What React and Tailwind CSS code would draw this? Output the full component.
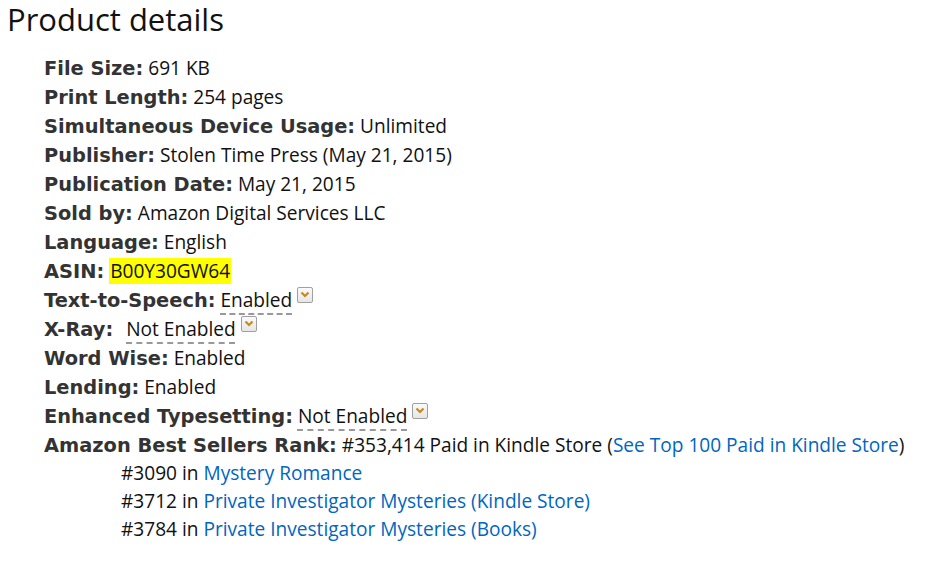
import React from 'react';

const rows = [
  { label: 'File Size:', value: '691 KB' },
  { label: 'Print Length:', value: '254 pages' },
  { label: 'Simultaneous Device Usage:', value: 'Unlimited' },
  { label: 'Publisher:', value: 'Stolen Time Press (May 21, 2015)' },
  { label: 'Publication Date:', value: 'May 21, 2015' },
  { label: 'Sold by:', value: 'Amazon Digital Services LLC' },
  { label: 'Language:', value: 'English' },
];

const ranks = [
  { rank: '#3090', name: 'Mystery Romance' },
  { rank: '#3712', name: 'Private Investigator Mysteries (Kindle Store)' },
  { rank: '#3784', name: 'Private Investigator Mysteries (Books)' },
];

const Label = ({ children }) => (
  <b className="font-['DejaVu_Sans',sans-serif] font-bold text-[19.4px] leading-none text-[#333]">{children}</b>
);

const Popover = () => (
  <span className="relative -top-[7px] inline-flex items-center justify-center w-[16px] h-[16px] ml-[5px] align-middle rounded-[2px] border border-[#a0a0a0] bg-gradient-to-b from-[#fafafa] to-[#e6e6e6]">
    <svg width="10" height="7" viewBox="0 0 10 7">
      <path d="M1.5 1.5 L5 5 L8.5 1.5" fill="none" stroke="#c9891d" strokeWidth="2.2" />
    </svg>
  </span>
);

const Dashed = ({ children }) => (
  <span className="underline decoration-dashed decoration-[#999] decoration-2 underline-offset-[6px]">{children}</span>
);

export default function App() {
  return (
    <div className="w-[925px] h-[562px] bg-white font-['Open_Sans',sans-serif] text-[#111] overflow-hidden">
      <h2 className="pl-[7px] text-[31px] leading-[38px]">Product details</h2>
      <ul className="pl-[44px] pt-[16px] text-[19.1px] leading-[29px]">
        {rows.map((r) => (
          <li key={r.label}>
            <Label>{r.label}</Label> {r.value}
          </li>
        ))}
        <li>
          <Label>ASIN:</Label> <span className="bg-[#ffff00] px-[1px]">B00Y30GW64</span>
        </li>
        <li>
          <Label>Text-to-Speech:</Label> <Dashed>Enabled</Dashed>
          <Popover />
        </li>
        <li>
          <Label>X-Ray:</Label>&nbsp;<span className="ml-[8px]"><Dashed>Not Enabled</Dashed></span>
          <Popover />
        </li>
        <li>
          <Label>Word Wise:</Label> Enabled
        </li>
        <li>
          <Label>Lending:</Label> Enabled
        </li>
        <li>
          <Label>Enhanced Typesetting:</Label> <Dashed>Not Enabled</Dashed>
          <Popover />
        </li>
        <li>
          <Label>Amazon Best Sellers Rank:</Label> #353,414 Paid in Kindle Store (
          <a className="text-[#0066c0]">See Top 100 Paid in Kindle Store</a>)
          <ul className="pl-[77px] leading-[28px] -mt-[1px]">
            {ranks.map((k) => (
              <li key={k.rank}>
                {k.rank} in <a className="text-[#0066c0]">{k.name}</a>
              </li>
            ))}
          </ul>
        </li>
      </ul>
    </div>
  );
}
